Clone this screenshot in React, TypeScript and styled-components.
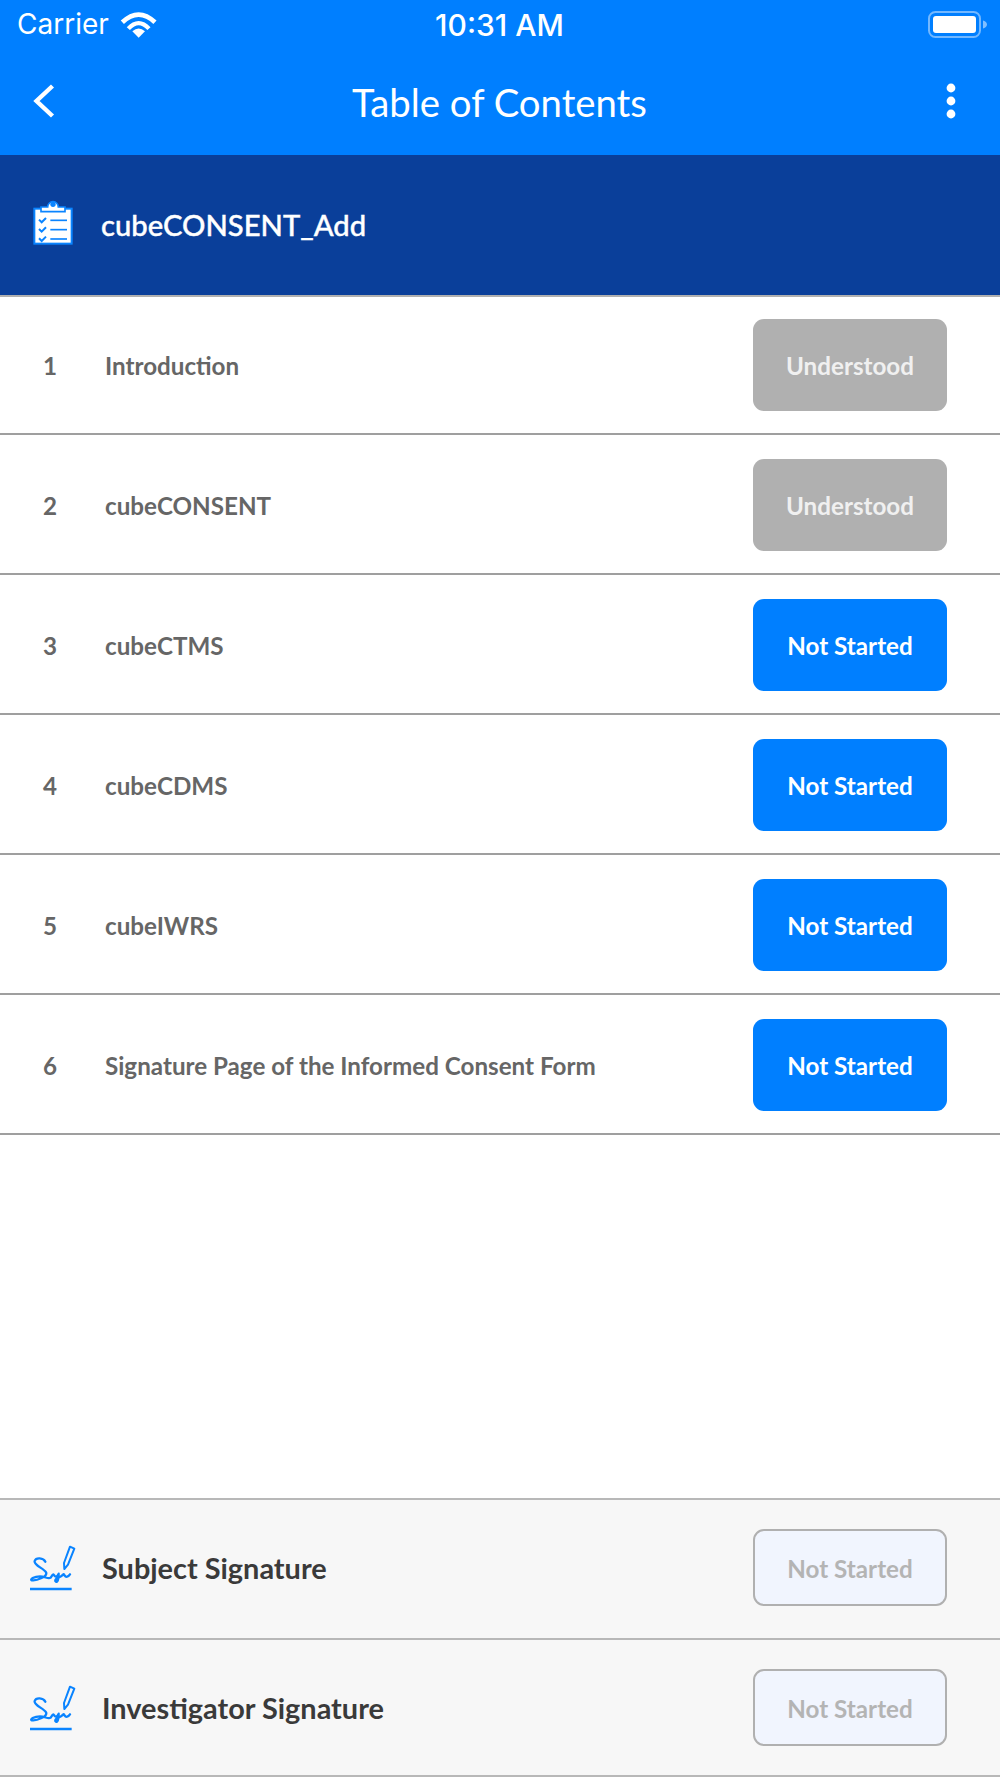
import React from "react";
import styled, { createGlobalStyle } from "styled-components";

const Global = createGlobalStyle`
  html, body { margin: 0; padding: 0; background: #fff; }
  body { font-family: Lato, "Open Sans", sans-serif; }
`;

const Page = styled.div`
  width: 1000px;
  height: 1778px;
  display: flex;
  flex-direction: column;
  background: #fff;
  overflow: hidden;
`;

const TopBlue = styled.header`
  height: 155px;
  background: #007fff;
  color: #fff;
  display: flex;
  flex-direction: column;
`;

const StatusBar = styled.div`
  height: 50px;
  display: grid;
  grid-template-columns: 1fr auto 1fr;
  align-items: center;
  padding: 0 18px 0 17px;
  font-family: Inter, "Open Sans", sans-serif;
  font-size: 28px;
  line-height: 50px;
`;

const StatusLeft = styled.div`
  display: flex;
  align-items: center;
  gap: 11px;
  font-weight: 400;
`;

const Carrier = styled.span`
  margin-top: -2px;
`;

const StatusTime = styled.div`
  font-weight: 500;
  font-size: 30px;
  margin-top: -1px;
`;

const StatusRight = styled.div`
  display: flex;
  justify-content: flex-end;
  align-items: center;
  margin-right: -6px;
`;

const NavBar = styled.nav`
  flex: 1;
  display: flex;
  align-items: center;
  justify-content: space-between;
  padding: 0 44px 3px 32px;
`;

const NavTitle = styled.h1`
  flex: 1;
  margin: 0;
  padding: 1px 3px 0 0;
  text-align: center;
  font-size: 38.3px;
  font-weight: 400;
  line-height: 50px;
`;

const DocHeader = styled.div`
  height: 142px;
  background: #0a3f9a;
  color: #fff;
  display: flex;
  align-items: center;
  gap: 28px;
  padding: 0 0 2px 33px;
  font-size: 29.2px;
  font-weight: 500;
  -webkit-text-stroke: 0.4px #fff;
  border-bottom: 2px solid #b0b0b0;
  box-sizing: border-box;
`;

const ClipboardSvg = styled.svg`
  margin-top: -4px;
`;

const List = styled.div`
  flex: 1;
  display: flex;
  flex-direction: column;
`;

const Row = styled.div`
  height: 140px;
  box-sizing: border-box;
  display: flex;
  align-items: center;
  padding: 2px 53px 0 0;
  border-bottom: 2px solid #9f9f9f;

  &:first-child {
    height: 138px;
    padding-top: 0;
  }
`;

const RowIndex = styled.span`
  width: 105px;
  padding-left: 43px;
  box-sizing: border-box;
  font-size: 24.2px;
  font-weight: 700;
  color: #666;
`;

const RowTitle = styled.span`
  flex: 1;
  font-size: 24.2px;
  font-weight: 700;
  color: #666;
`;

const StatusButton = styled.button<{ $variant: "done" | "todo" | "locked" }>`
  box-sizing: border-box;
  width: 194px;
  padding: ${(p) => (p.$variant === "locked" ? "2px 0 0" : "0")};
  border-radius: 11px;
  font-family: inherit;
  font-size: 24.2px;
  font-weight: 700;
  height: ${(p) => (p.$variant === "locked" ? "77px" : "92px")};
  color: ${(p) => (p.$variant === "locked" ? "#b4b4b4" : p.$variant === "done" ? "#f0f0f0" : "#fff")};
  background: ${(p) => (p.$variant === "locked" ? "#f1f5fe" : p.$variant === "done" ? "#b0b0b0" : "#007fff")};
  border: ${(p) => (p.$variant === "locked" ? "2px solid #b0b0b0" : "none")};
`;

const SignTop = styled.div`
  border-top: 2px solid #b8b8b8;
  margin-bottom: 1px;
`;

const SignRow = styled.div`
  height: 140px;
  box-sizing: border-box;
  display: flex;
  align-items: center;
  gap: 26px;
  padding: 0 53px 3px 30px;
  background: #f7f7f7;
  border-bottom: 2px solid #b8b8b8;

  &:last-child {
    height: 137px;
    padding-bottom: 0;
  }
`;

const SignLabel = styled.span`
  flex: 1;
  font-size: 28.9px;
  font-weight: 700;
  color: #3a3a3a;
`;

const Wifi = () => (
  <svg width="37.3" height="27.3" viewBox="360 30 112 82">
    <path d="M367 64 Q416 18 465 64" fill="none" stroke="#fff" strokeWidth="14" />
    <path d="M385 83 Q416 50 447 83" fill="none" stroke="#fff" strokeWidth="13" />
    <path d="M416 110 L397 91 Q416 74 435 91 Z" fill="#fff" />
  </svg>
);

const Battery = () => (
  <svg width="60" height="28" viewBox="0 0 60 28">
    <rect x="1" y="1" width="51" height="25" rx="6.5" fill="none" stroke="#fff" strokeOpacity="0.45" strokeWidth="2" />
    <rect x="5" y="5" width="43" height="17" rx="3" fill="#fff" />
    <path d="M55 9.5 C58 10.5 59 12 59 13.5 C59 15 58 16.5 55 17.5 Z" fill="#fff" fillOpacity="0.5" />
  </svg>
);

const Back = () => (
  <svg width="24" height="36" viewBox="0 0 24 36">
    <path d="M20.5 3 L4.5 18 L20.5 33" fill="none" stroke="#fff" strokeWidth="4.4" />
  </svg>
);

const Kebab = () => (
  <svg width="10" height="36" viewBox="0 0 10 36">
    <circle cx="5" cy="5" r="4.4" fill="#fff" />
    <circle cx="5" cy="18" r="4.4" fill="#fff" />
    <circle cx="5" cy="31" r="4.4" fill="#fff" />
  </svg>
);

const Clipboard = () => (
  <ClipboardSvg width="40" height="46.67" viewBox="40 30 120 140">
    <rect x="44" y="59" width="112" height="105" fill="#fff" stroke="#0a84ff" strokeWidth="6" />
    <path d="M64 68 V54 H84 A16 16 0 0 1 116 54 H136 V68 Z" fill="#fff" stroke="#0a84ff" strokeWidth="5" />
    <circle cx="100" cy="46" r="8" fill="#0a84ff" />
    {[92, 120, 148].map((y) => (
      <g key={y} fill="none" stroke="#0a84ff">
        <path d={`M58 ${y} l8 8 l13 -13`} strokeWidth="6" />
        <path d={`M92 ${y + 2} H142`} strokeWidth="5" />
      </g>
    ))}
  </ClipboardSvg>
);

const Signature = () => (
  <svg width="46" height="48.67" viewBox="30 36 138 146">
    <g fill="none" stroke="#0a84ff" strokeLinejoin="round" strokeLinecap="round">
      <path strokeWidth="6" d="M150 47 L163 53 L144 101 L133 114 L132 96 Z" />
      <path
        strokeWidth="7"
        d="M76 92 C70 80 48 78 44 90 C40 103 72 112 78 124 C84 136 50 150 36 148 C28 146 42 136 60 136 C75 136 85 146 92 140 C97 134 98 128 102 132 C104 138 110 140 116 128 C116 145 112 158 106 150 C104 140 122 140 128 132 C130 128 132 128 134 134 C138 140 144 138 150 130"
      />
      <path strokeWidth="7" strokeLinecap="butt" d="M30 174 H155" />
    </g>
  </svg>
);

const items: { title: string; status: "done" | "todo" }[] = [
  { title: "Introduction", status: "done" },
  { title: "cubeCONSENT", status: "done" },
  { title: "cubeCTMS", status: "todo" },
  { title: "cubeCDMS", status: "todo" },
  { title: "cubeIWRS", status: "todo" },
  { title: "Signature Page of the Informed Consent Form", status: "todo" },
];

export default function App() {
  return (
    <Page>
      <Global />
      <TopBlue>
        <StatusBar>
          <StatusLeft>
            <Carrier>Carrier</Carrier> <Wifi />
          </StatusLeft>
          <StatusTime>10:31 AM</StatusTime>
          <StatusRight>
            <Battery />
          </StatusRight>
        </StatusBar>
        <NavBar>
          <Back />
          <NavTitle>Table of Contents</NavTitle>
          <Kebab />
        </NavBar>
      </TopBlue>
      <DocHeader>
        <Clipboard />
        cubeCONSENT_Add
      </DocHeader>
      <List>
        {items.map((it, i) => (
          <Row key={it.title}>
            <RowIndex>{i + 1}</RowIndex>
            <RowTitle>{it.title}</RowTitle>
            <StatusButton $variant={it.status}>
              {it.status === "done" ? "Understood" : "Not Started"}
            </StatusButton>
          </Row>
        ))}
      </List>
      <SignTop>
        <SignRow>
          <Signature />
          <SignLabel>Subject Signature</SignLabel>
          <StatusButton $variant="locked">Not Started</StatusButton>
        </SignRow>
        <SignRow>
          <Signature />
          <SignLabel>Investigator Signature</SignLabel>
          <StatusButton $variant="locked">Not Started</StatusButton>
        </SignRow>
      </SignTop>
    </Page>
  );
}
